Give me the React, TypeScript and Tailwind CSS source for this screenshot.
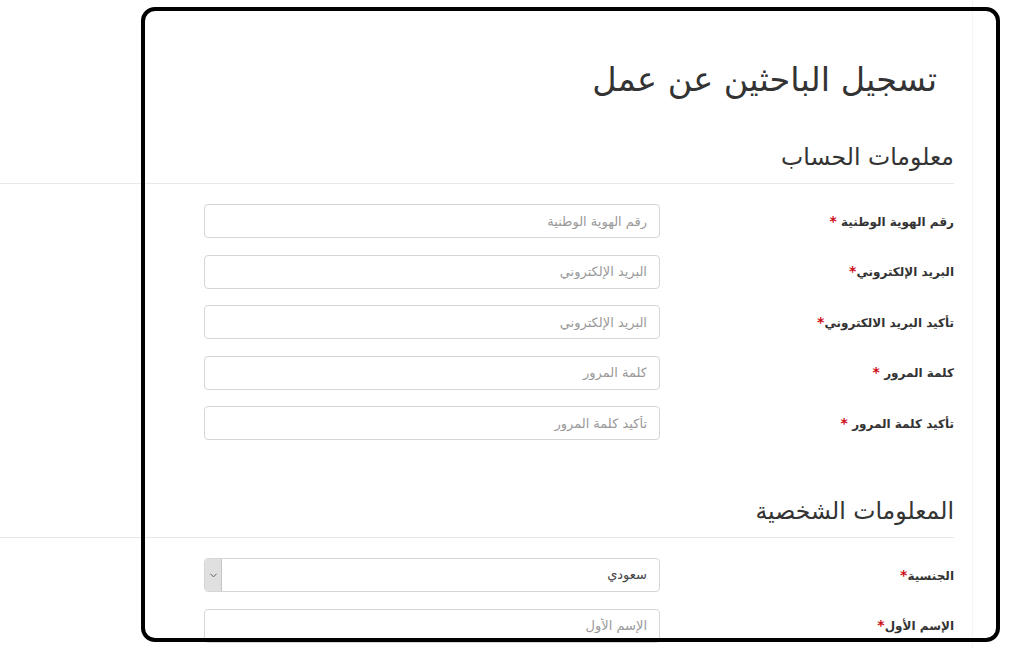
import { ChevronDown } from "lucide-react";

const font = { fontFamily: '"DejaVu Sans", "Noto Sans", sans-serif' };

type Field = { label: string; star: "spaced" | "tight"; placeholder: string };

const accountFields: Field[] = [
	{ label: "رقم الهوية الوطنية", star: "spaced", placeholder: "رقم الهوية الوطنية" },
	{ label: "البريد الإلكتروني", star: "tight", placeholder: "البريد الإلكتروني" },
	{ label: "تأكيد البريد الالكتروني", star: "tight", placeholder: "البريد الإلكتروني" },
	{ label: "كلمة المرور", star: "spaced", placeholder: "كلمة المرور" },
	{ label: "تأكيد كلمة المرور", star: "spaced", placeholder: "تأكيد كلمة المرور" },
];

function Label({ text, star }: { text: string; star: "spaced" | "tight" }) {
	return (
		<div className="flex w-[294px] shrink-0 items-center text-[12px] font-bold text-[#333]">
			<span>
				{text}
				{star === "spaced" ? " " : ""}
				<span className="text-[14px] text-[#cc0a14]">*</span>
			</span>
		</div>
	);
}

function TextInput({ placeholder }: { placeholder: string }) {
	return (
		<input
			type="text"
			placeholder={placeholder}
			style={font}
			className="h-[34px] w-[456px] rounded-[4px] border border-[#d6d6d6] bg-white pr-[12px] pl-3 text-[13px] text-[#555] outline-none placeholder:text-[#9a9a9a]"
		/>
	);
}

function SectionHeading({ children }: { children: string }) {
	return (
		<h3 className="border-b border-[#e8e8e8] pb-[11px] text-[23.6px] leading-[30px] font-normal text-[#333]">
			{children}
		</h3>
	);
}

export default function App() {
	return (
		<div className="relative h-[648px] w-[1024px] overflow-hidden bg-white" style={font}>
			<div className="flex h-full">
				<div dir="rtl" className="w-[954px] shrink-0">
					{/* page title */}
					<h1 className="pt-[58px] pr-[17px] text-[33.5px] leading-[44px] font-normal text-[#333]">
						تسجيل الباحثين عن عمل
					</h1>

					<div className="mt-[40px]">
						<SectionHeading>معلومات الحساب</SectionHeading>
					</div>

					<div className="mt-[20px] flex flex-col gap-[16.5px]">
						{accountFields.map((f) => (
							<div key={f.label} className="flex h-[34px]">
								<Label text={f.label} star={f.star} />
								<TextInput placeholder={f.placeholder} />
							</div>
						))}
					</div>

					<div className="mt-[56px]">
						<SectionHeading>المعلومات الشخصية</SectionHeading>
					</div>

					<div className="mt-[20px] flex flex-col gap-[16.5px]">
						<div className="flex h-[34px]">
							<Label text="الجنسية" star="tight" />
							<div className="flex h-[34px] w-[456px] overflow-hidden rounded-[4px] border border-[#d6d6d6] bg-white">
								<div className="flex flex-1 items-center pr-[12px] text-[13px] text-[#444]">سعودي</div>
								<div className="flex w-[17px] items-center justify-center border-r border-[#c4c4c4] bg-[#e0e0e0]">
									<ChevronDown className="size-[11px] text-[#555]" strokeWidth={2} />
								</div>
							</div>
						</div>
						<div className="flex h-[34px]">
							<Label text="الإسم الأول" star="tight" />
							<TextInput placeholder="الإسم الأول" />
						</div>
					</div>
				</div>

				<div className="w-[18px] shrink-0" />
				<div className="flex-1 border-l border-[#f4f4f4]" />
			</div>

			{/* annotation frame drawn over the page */}
			<div className="pointer-events-none absolute top-[7px] left-[141px] h-[635px] w-[859px] rounded-[14px] border-[4px] border-black" />
		</div>
	);
}
